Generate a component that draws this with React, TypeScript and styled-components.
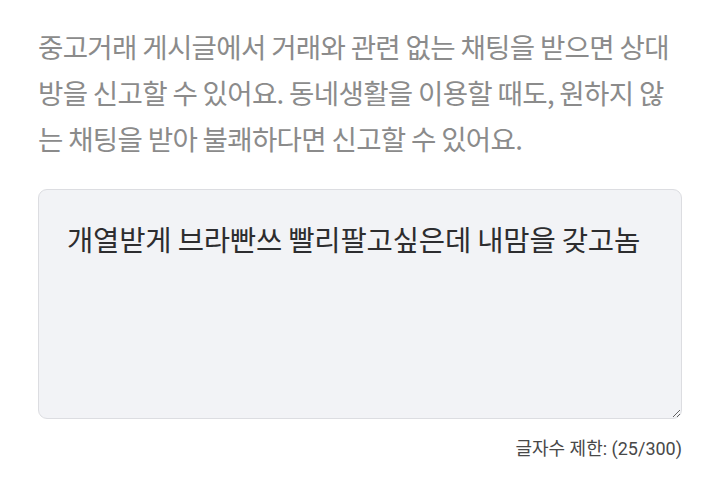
import styled, { createGlobalStyle } from "styled-components";

const GlobalStyle = createGlobalStyle`
  html, body {
    margin: 0;
    padding: 0;
    background: #ffffff;
  }
  body {
    font-family: "Noto Sans CJK KR", "Noto Sans", sans-serif;
  }
`;

export default function App() {
  return (
    <>
      <GlobalStyle />
      <Page>
        <Notice>
          중고거래 게시글에서 거래와 관련 없는 채팅을 받으면 상대방을 신고할 수
          있어요. 동네생활을 이용할 때도, 원하지 않는 채팅을 받아 불쾌하다면
          신고할 수 있어요.
        </Notice>
        <ReasonBox
          readOnly
          defaultValue="개열받게 브라빤쓰 빨리팔고싶은데 내맘을 갖고놈"
        />
        <Counter>글자수 제한: (25/300)</Counter>
      </Page>
    </>
  );
}

/* ---------------- styles ---------------- */

const Page = styled.div`
  width: 644px;
  padding: 23px 36px 0 38px;
  display: flex;
  flex-direction: column;
`;

const Notice = styled.p`
  margin: 0;
  font-size: 27.6px;
  line-height: 46px;
  color: #8b8b8b;
  word-break: break-all;
  letter-spacing: -0.7px;
`;

const ReasonBox = styled.textarea`
  box-sizing: border-box;
  margin-top: 28px;
  width: 644px;
  height: 230px;
  padding: 29px 28px;
  border: 1px solid #dcdde1;
  border-radius: 9px;
  background: #f2f3f6;
  font-family: "Noto Sans CJK KR", "Noto Sans", sans-serif;
  font-size: 28.6px;
  line-height: 40px;
  color: #2d2d2f;
  letter-spacing: -0.2px;
  outline: none;
`;

const Counter = styled.div`
  margin-top: 15px;
  align-self: flex-end;
  font-family: Roboto, "Noto Sans CJK KR", sans-serif;
  font-size: 18px;
  color: #484848;
`;
